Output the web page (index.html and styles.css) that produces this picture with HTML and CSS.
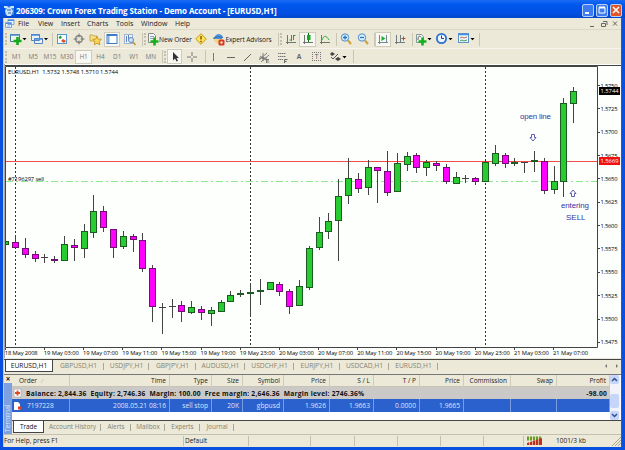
FILE: index.html
```html
<!DOCTYPE html>
<html lang="en">
<head>
    <meta charset="UTF-8">
    <title>206309: Crown Forex Trading Station</title>
    <link rel="stylesheet" href="styles.css">
</head>
<body>
<div class="window">
    <div class="titlebar">
        <svg class="app-icon" width="11" height="11" viewBox="0 0 11 11"><rect x="1" y="1" width="9" height="9" fill="#3c86dc"/><path d="M0 1h3l2 2 2-2h3v2H7l2 3-2 5H3L1 6l2-3H0z" fill="#c8e4f8"/><path d="M3 5h4M4 8h3" stroke="#2860b0"/></svg>
        <span class="title">206309: Crown Forex Trading Station - Demo Account - [EURUSD,H1]</span>
        <div class="win-buttons">
            <span class="win-btn"><svg width="12" height="12"><path d="M3 9h4" stroke="#fff" stroke-width="2"/></svg></span>
            <span class="win-btn"><svg width="12" height="12"><path d="M3 3.5h6v5.500H3z" stroke="#fff" fill="none"/><path d="M3 3.500h6" stroke="#fff" stroke-width="2"/></svg></span>
            <span class="win-btn close"><svg width="12" height="12"><path d="M3 3l6 6M9 3l-6 6" stroke="#fff" stroke-width="1.600"/></svg></span>
        </div>
    </div>

    <div class="client">
        <div class="menubar">
            <svg class="menu-icon" width="10" height="10"><path d="M3 .5h6v5H3zM.5 3.500h6v5h-6z" fill="#e8f2fc" stroke="#7ca8dc"/><path d="M3 1.500h6M1 4.500h5" stroke="#4c8cdc"/><path d="M2 7h3" stroke="#8cb4e4"/></svg>
            <span class="m-file">File</span>
            <span class="m-view">View</span>
            <span class="m-insert">Insert</span>
            <span class="m-charts">Charts</span>
            <span class="m-tools">Tools</span>
            <span class="m-window">Window</span>
            <span class="m-help">Help</span>
            <svg class="mdi" width="32" height="10"><path d="M2 7.500h4M13.500 4.500h4v3h-4zM15 2.500h4v3.500M25 2.500l4 4M29 2.500l-4 4" stroke="#666" fill="none"/></svg>
        </div>

        <div class="toolbar main-tools">
            <i class="grip"></i>
            <span class="btn w20"><svg width="18" height="14"><path d="M1.500 2.500h9v7h-9z" fill="#eef4e8" stroke="#4a7a9a"/><path d="M1 3h9" stroke="#4a90d0" stroke-width="1.500"/><path d="M8.500 5v8M4.500 9h8" stroke="#16a81c" stroke-width="2.600"/><path d="M13.500 6h4l-2 2.200z"/></svg></span>
            <span class="btn w21"><svg width="18" height="14"><path d="M1.500 2.500h8v6h-8zM4.500 6.500h8v5h-8z" fill="#e8f0fa" stroke="#5586bd"/><path d="M1 3h9M4 7h9" stroke="#4a8bd8" stroke-width="1.300"/><path d="M14 6h4l-2 2.200z"/></svg></span>
            <i class="sep"></i>
            <span class="btn w18"><svg width="12" height="12"><rect x="1.500" y="1.500" width="9" height="9" fill="#f6fafe" stroke="#5599cf"/><path d="M2.500 4.500L4.500 2.500 6 4.500 4 6z" fill="#14a02a"/><path d="M5 8l2-2 3 2-2 2z" fill="#e0502c"/></svg></span>
            <span class="btn w16"><svg width="12" height="12"><circle cx="6" cy="6" r="3.300" fill="none" stroke="#777" stroke-width="1.200"/><path d="M6 .5v4M6 7.500v4M.5 6h4M7.500 6h4" stroke="#777"/></svg></span>
            <span class="btn w17"><svg width="13" height="13"><path d="M1 2h3l1 1h3v5H1z" fill="#f6e08a" stroke="#c09a36" stroke-width=".8"/><path d="M8 3.500l1.300 2.600 3.100.3-2.200 2.100.6 3.200L8 10.300l-2.700 1.400.5-3.200-2.200-2.100 3.100-.3z" fill="#fbd554" stroke="#c48a1c" stroke-width=".8"/></svg></span>
            <span class="btn w16 pressed"><svg width="12" height="12"><rect x="1" y="1.500" width="10" height="9" fill="#fff" stroke="#3e7cc4"/><path d="M1 2.500h10" stroke="#3e7cc4"/><path d="M2.500 3v7" stroke="#78aee0" stroke-width="2"/></svg></span>
            <span class="btn w19"><svg width="13" height="13"><rect x="1.500" y="1.500" width="8" height="9" fill="#eef3fa" stroke="#9cb4d4"/><path d="M3.500 3v6M5.500 2v5M7.500 4v5" stroke="#6482b8"/><circle cx="8" cy="7" r="2.500" fill="#cfe4f8" stroke="#5c8cc0"/><path d="M10 9l2.500 3" stroke="#c8963c" stroke-width="1.600"/></svg></span>
            <i class="sep"></i><i class="grip"></i>
            <span class="btn w45"><svg width="12" height="14"><path d="M1.500 1.500h5l2 2v7h-7z" fill="#f4f4f4" stroke="#888"/><path d="M3 4.500h4M3 6.500h4" stroke="#8fa6b8"/><path d="M7.500 5.500v8M3.500 9.500h8" stroke="#16b01c" stroke-width="2.600"/></svg><b class="label">New Order</b></span>
            <span class="btn w18"><svg width="12" height="12"><path d="M6 .7L11.300 6 6 11.300.7 6z" fill="#ffe45a" stroke="#c8961c"/><path d="M6 3v3.600M6 7.800v1.500" stroke="#6b4a00" stroke-width="1.300"/></svg></span>
            <span class="btn w65"><svg width="12" height="13"><path d="M1 5c2-5 7-5 9-1l-2 3-6 1z" fill="#4f94dc"/><path d="M1 6h8l-1 4-3 1-3-2z" fill="#f5d67c"/><path d="M0 5.500c3-2 6-2 10-1" stroke="#2d68b0" fill="none"/><rect x="5.500" y="6.500" width="6" height="6" rx="1.500" fill="#d83a20"/><rect x="7.500" y="8.500" width="2" height="2" fill="#fff"/></svg><b class="label">Expert Advisors</b></span>
            <i class="sep"></i><i class="grip"></i>
            <span class="btn w16"><svg width="12" height="12"><path d="M2.500 2v9M1 9.500h10" stroke="#6d776d"/><path d="M6.500 2v6M8.500 2v5M4.500 7h2M8.500 2.500h2" stroke="#2d9a3c"/></svg></span>
            <span class="btn w17 pressed"><svg width="12" height="12"><path d="M2.500 2v9M1 9.500h10" stroke="#6d776d"/><path d="M6.500 0v9" stroke="#0a7014"/><rect x="5" y="2" width="3.500" height="5" fill="#16a824"/></svg></span>
            <span class="btn w17"><svg width="12" height="12"><path d="M2.500 2v9M1 9.500h10" stroke="#6d776d"/><path d="M3 7c2-5 4-5 7 0" stroke="#3aa848" fill="none"/></svg></span>
            <i class="sep"></i>
            <span class="btn w17"><svg width="12" height="12"><circle cx="5" cy="4.500" r="3.700" fill="#d9efff" stroke="#4a8cc8"/><path d="M3 4.500h4M5 2.500v4" stroke="#2874c0" stroke-width="1.300"/><path d="M8 7.500l3 3.500" stroke="#cda23a" stroke-width="2"/></svg></span>
            <span class="btn w17"><svg width="12" height="12"><circle cx="5" cy="4.500" r="3.700" fill="#d9efff" stroke="#4a8cc8"/><path d="M3 4.500h4" stroke="#2874c0" stroke-width="1.300"/><path d="M8 7.500l3 3.500" stroke="#cda23a" stroke-width="2"/></svg></span>
            <i class="sep"></i>
            <span class="btn w16 pressed"><svg width="12" height="12"><path d="M2.500 2v9M1 9.500h10M9.500 2v7" stroke="#6d8d90"/><path d="M4.500 3l4 2.500-4 2.500z" fill="#1cac30"/></svg></span>
            <span class="btn w18"><svg width="12" height="12"><path d="M2.500 2v9M1 9.500h10M6.500 2v7" stroke="#6d7d80"/><path d="M7.500 5.500h4M9.500 3.500v4" stroke="#b04a30"/></svg></span>
            <i class="sep"></i>
            <span class="btn w20"><svg width="18" height="14"><path d="M2.500 2.500h5l2 2v6h-7z" fill="#f0f2ee" stroke="#899"/><path d="M4 8c0-5 2-4 3-3" stroke="#566" fill="none"/><path d="M8.500 5.500v8M4.500 9.500h8" stroke="#16b01c" stroke-width="2.600"/><path d="M13.500 6h4l-2 2.200z"/></svg></span>
            <span class="btn w22"><svg width="18" height="14"><circle cx="6.500" cy="6.500" r="4.600" fill="#eaf5ff" stroke="#2b70d0" stroke-width="1.800"/><path d="M6.500 3.500v3h2.500" stroke="#345" fill="none"/><path d="M13.500 6h4l-2 2.200z"/></svg></span>
            <span class="btn w21"><svg width="18" height="14"><rect x="1.500" y="1.500" width="10" height="9" fill="#edf6fb" stroke="#5a94cc"/><path d="M1 2.500h11" stroke="#4a8cd8" stroke-width="1.500"/><path d="M3 6l2-1 2 1 3-1" stroke="#b07850" fill="none"/><path d="M3 9l2-1 2 1 3-1" stroke="#4a9a58" fill="none"/><path d="M13.500 6h4l-2 2.200z"/></svg></span>
            <i class="sep"></i>
        </div>

        <div class="toolbar period-tools">
            <i class="grip"></i>
            <span class="period">M1</span>
            <span class="period">M5</span>
            <span class="period">M15</span>
            <span class="period">M30</span>
            <span class="period pressed">H1</span>
            <span class="period">H4</span>
            <span class="period">D1</span>
            <span class="period">W1</span>
            <span class="period">MN</span>
            <i class="sep"></i><i class="grip"></i>
            <span class="btn w15 pressed"><svg width="10" height="12"><path d="M3 1v8.500l2-2 1.500 3 1.500-.7-1.500-2.800H9z" fill="#333"/></svg></span>
            <span class="btn w20"><svg width="12" height="12"><path d="M6 1v4M6 7v4M1 6h4M7 6h4" stroke="#777"/></svg></span>
            <i class="sep"></i>
            <span class="btn w15"><svg width="11" height="12"><path d="M5.500 2v8" stroke="#777"/></svg></span>
            <span class="btn w18"><svg width="11" height="12"><path d="M2 6.500h8" stroke="#666"/></svg></span>
            <span class="btn w16"><svg width="11" height="12"><path d="M2 10l7-7" stroke="#666"/></svg></span>
            <span class="btn w18"><svg width="12" height="12"><path d="M1 9l8-7M3 11l8-7M2 5l6 4M5 2v8M1 7h8M8 8.500h3M8.500 8v4h3M9 10h2" stroke="#666" stroke-width=".8" fill="none"/></svg></span>
            <span class="btn w18"><svg width="12" height="12"><path d="M2 2.500h8M2 5.500h8M2 8.500h5" stroke="#777" stroke-dasharray="1.500 .5"/><path d="M8.500 12V8.500h3M8.500 10.500h2" stroke="#666" fill="none"/></svg></span>
            <span class="btn w16 letter">A</span>
            <span class="btn w19"><span class="text-box">T</span></span>
            <span class="btn w24"><svg width="18" height="12"><path d="M1 3l2-2 3 2-3 2zM6 8l3-2 3 2-3 2z" fill="#444"/><path d="M2 6l2 2 5-5" stroke="#555" fill="none"/><path d="M13.500 5h4l-2 2.500z"/></svg></span>
            <i class="sep"></i>
        </div>

        <svg id="chart" class="chart" width="617" height="294" viewBox="4 64 617 294">
            <path class="frame" d="M4 65.500H621M5.500 347.500V66.500H597.500V347.500H5.500"/>
            <path class="shade" d="M4.500 64V358"/>
            <g id="day-lines" class="day-lines"></g>
            <path class="order-line" d="M6 181.500H597"/>
            <path class="bid-line" d="M6 161.500H597"/>
            <g id="candles"></g>
            <g id="axes" class="axes"></g>
            <text x="8" y="74" textLength="110">EURUSD,H1&#160; 1.5732 1.5748 1.5710 1.5744</text>
            <text x="8" y="180.500" textLength="36">#7196297 sell</text>
            <rect x="599" y="87" width="21" height="8" fill="#000"/>
            <text class="price-tag" x="600.500" y="93.300" textLength="18">1.5744</text>
            <rect x="599" y="157" width="21" height="8" fill="#f01010"/>
            <text class="price-tag" x="600.500" y="163.300" textLength="18">1.5669</text>
            <g class="notes">
                <text x="520" y="119" textLength="31">open line</text>
                <text x="561" y="208" textLength="28">entering</text>
                <text x="566" y="219.500" textLength="19.500">SELL</text>
                <path d="M531.500 134.500h3v3h1.500l-3 3.500-3-3.500h1.500zM571.500 196.500h3v-3h1.500l-3-3.500-3 3.500h1.500z"/>
            </g>
        </svg>

        <div class="chart-tabs">
            <span class="tab active">EURUSD,H1</span>
            <span class="tab t50">GBPUSD,H1</span>
            <span class="tab t45">USDJPY,H1</span>
            <span class="tab t47">GBPJPY,H1</span>
            <span class="tab t49">AUDUSD,H1</span>
            <span class="tab t49">USDCHF,H1</span>
            <span class="tab t46">EURJPY,H1</span>
            <span class="tab t49">USDCAD,H1</span>
            <span class="tab t49">EURUSD,H1</span>
            <svg class="tab-arrows" width="18" height="8"><path d="M4 2v4L2 4zM13 2v4l2-2z" fill="#777"/></svg>
        </div>

        <div class="terminal">
            <div class="side"><span class="side-close">×</span><div class="side-name">Terminal</div></div>
            <div class="panel">
                <div class="grid-wrap">
                    <div class="orders">
                        <div class="row head">
                            <span class="order">Order <small>⁄</small></span><span>Time</span><span>Type</span><span>Size</span><span>Symbol</span><span>Price</span><span>S / L</span><span>T / P</span><span>Price</span><span>Commission</span><span>Swap</span><span>Profit</span>
                        </div>
                        <div class="balance">
                            <svg width="9" height="10"><rect x="1" y="1" width="7" height="8" fill="#fff" stroke="#aaa" stroke-width=".7"/><path d="M4.500 2.500v5M2 5h5" stroke="#e04828" stroke-width="1.800"/></svg>
                            <span class="sums">Balance: 2,844.36&nbsp; Equity: 2,746.36&nbsp; Margin: 100.00&nbsp; Free margin: 2,646.36&nbsp; Margin level: 2746.36%</span>
                            <span class="profit">-98.00</span>
                        </div>
                        <div class="row selected">
                            <span class="order"><svg width="9" height="10"><path d="M1 1h4l2 2v6H1z" fill="#fff"/><path d="M5 5.500h3.500v3H5z" fill="#e04020"/></svg>7197228</span><span>2008.05.21 08:16</span><span>sell stop</span><span>20K</span><span>gbpusd</span><span>1.9626</span><span>1.9663</span><span>0.0000</span><span>1.9665</span><span></span><span></span><span></span>
                        </div>
                    </div>
                    <div class="scrollbar">
                        <svg width="9" height="9"><path d="M2 6l2.500-2.500L7 6" stroke="#34508c" stroke-width="1.500" fill="none"/></svg>
                        <i class="thumb"></i>
                        <svg width="9" height="9"><path d="M2 3l2.500 2.500L7 3" stroke="#34508c" stroke-width="1.500" fill="none"/></svg>
                    </div>
                </div>
                <div class="term-tabs">
                    <span class="tab active">Trade</span>
                    <span class="tab t57">Account History</span>
                    <span class="tab t30">Alerts</span>
                    <span class="tab t34">Mailbox</span>
                    <span class="tab t35">Experts</span>
                    <span class="tab t34">Journal</span>
                </div>
            </div>
        </div>

        <div class="statusbar">
            <span class="help-text">For Help, press F1</span>
            <span class="profile">Default</span>
            <span class="c62"></span><span class="c44"></span><span class="c43"></span><span class="c43"></span><span class="c43"></span><span class="c40"></span>
            <svg class="net" width="16" height="10"><path d="M0 2.500h15" stroke="#6a9a28" stroke-width="4" stroke-dasharray="2.200 .8"/><path d="M0 9V7l15-5v7z" fill="#c03020"/><path d="M2.500 1v8M5.500 1v8M8.500 1v8M11.500 1v8" stroke="#ece0c8" stroke-width=".7"/></svg>
            <span class="traffic">1001/3 kb</span>
            <svg class="size-grip" width="10" height="10"><path d="M1 10l9-9M4 10l6-6M7 10l3-3" stroke="#aaa797"/></svg>
        </div>
    </div>
</div>
<script src="script.js"></script>
</body>
</html>
```
FILE: styles.css
```css
* {
    box-sizing: border-box;
}

body {
    margin: 0;
    overflow: hidden;
    font-family: "Open Sans", "Noto Sans", sans-serif;
    font-size: 6.7px;
    line-height: 9px;
    color: #222;
}

svg {
    display: block;
    flex: none;
}

.window {
    width: 625px;
    height: 450px;
    display: flex;
    flex-direction: column;
    background: #0a50e0;
}

.titlebar {
    height: 18px;
    display: flex;
    align-items: center;
    padding: 2px 3px 0 4px;
    background: linear-gradient(#1a6cf4, #0058ee 25%, #0050e4 70%, #0048cc);
}

.title {
    margin-left: 1px;
    flex: 1;
    color: #fff;
    font-size: 8px;
    font-weight: bold;
    letter-spacing: -.11px;
    white-space: nowrap;
}

.win-buttons {
    display: flex;
    gap: 2px;
}

.win-btn {
    width: 12px;
    height: 13px;
    border: 1px solid #b8d0f8;
    border-radius: 2px;
    background: #3c7cf0;
}

.win-btn svg {
    margin: -1px;
}

.close {
    background: #e05428;
}

.client {
    flex: 1;
    margin: 0 3px 3px;
    border-left: 1px solid #b8c8e8;
    border-right: 1px solid #1c5ce0;
    background: #ece9d8;
    display: flex;
    flex-direction: column;
}

/* menu */
.menubar {
    height: 12px;
    display: flex;
    align-items: center;
    border-bottom: 1px solid #dcd8c8;
    font-size: 7px;
}

.menu-icon { margin: 1px 3px 0 1px; }
.m-file { width: 20px; }
.m-view { width: 23px; }
.m-insert { width: 26px; }
.m-charts { width: 29px; }
.m-tools { width: 25px; }
.m-window { width: 34px; }
.m-help { flex: 1; }
.mdi { margin-right: 1px; }

/* toolbars */
.toolbar {
    display: flex;
    align-items: center;
}

.main-tools { height: 18px; }

.period-tools {
    height: 16px;
    border-top: 1px solid #f6f4ec;
}

.grip {
    width: 4px;
    height: 12px;
    flex: none;
    border-left: 2px dotted #c4c0ae;
    margin-left: 1px;
    margin-right: -1px;
}

.sep {
    width: 4px;
    height: 13px;
    flex: none;
    border-right: 1px solid #c9c5b3;
}

.btn {
    height: 15px;
    flex: none;
    display: flex;
    align-items: center;
    justify-content: center;
}

.pressed {
    background: #f8f7f1;
    border: 1px solid #d0ccbc;
}

.label {
    font-weight: normal;
    font-size: 6.6px;
    white-space: nowrap;
    letter-spacing: -.1px;
}

.w15 { width: 15px; }
.w16 { width: 16px; }
.w17 { width: 17px; }
.w18 { width: 18px; }
.w19 { width: 19px; }
.w20 { width: 20px; }
.w21 { width: 21px; }
.w22 { width: 22px; }
.w24 { width: 24px; }
.w45 { width: 45px; }
.w65 { width: 65px; }

.period {
    width: 16.8px;
    height: 14px;
    line-height: 13px;
    text-align: center;
    color: #777;
    font-size: 6.4px;
}

.period.pressed { line-height: 11px; }

.letter {
    font-weight: bold;
    color: #666;
}

.text-box {
    width: 9px;
    height: 9px;
    border: 1px dotted #777;
    line-height: 7px;
    text-align: center;
    color: #555;
}

/* chart */
.chart {
    background: #fdfffc;
    font-size: 5.8px;
}

.frame {
    fill: none;
    stroke: #444;
}

.shade { stroke: #aaa; }

.day-lines {
    stroke: #333;
    stroke-dasharray: 2 2;
}

.order-line {
    stroke: #8ee68e;
    stroke-dasharray: 7 3 2 3;
}

.bid-line { stroke: #f04c4c; }

.wick {
    stroke: #444;
}

.up {
    fill: #28cc30;
    stroke: #1c5c20;
}

.down {
    fill: #ff00ff;
    stroke: #701070;
}

.axes path { stroke: #444; }
.price-tag { fill: #fff; }

.notes {
    fill: #3434a4;
    font-family: "Liberation Sans", sans-serif;
    font-size: 7.9px;
}

.notes path {
    fill: #fff;
    stroke: #4c4cac;
    stroke-width: .9;
}

/* tabs */
.chart-tabs, .term-tabs {
    display: flex;
    color: #86826f;
}

.chart-tabs {
    height: 14px;
    border-top: 1px solid #444;
    margin-top: 1px;
    align-items: flex-start;
}

.tab {
    height: 12px;
    line-height: 12px;
    text-align: center;
    white-space: nowrap;
    background: linear-gradient(#aaa695, #aaa695) right center / 1px 7px no-repeat;
}

.active {
    background: #fff;
    color: #111;
    border: 1px solid #444;
    border-top: 0;
}

.chart-tabs .active {
    width: 48px;
    margin-left: 1px;
}

.t30 { width: 30px; }
.t34 { width: 34px; }
.t35 { width: 35px; }
.t45 { width: 45px; }
.t46 { width: 46px; }
.t47 { width: 47px; }
.t49 { width: 49px; }
.t50 { width: 51px; }
.t57 { width: 57px; }

.tab-arrows { margin: 2px 0 0 auto; }

/* terminal */
.terminal {
    height: 60px;
    margin-top: 1px;
    border-top: 1px solid #777;
    display: flex;
}

.side {
    width: 8px;
    display: flex;
    flex-direction: column;
}

.side-close {
    height: 8px;
    line-height: 7px;
    font-size: 8px;
    font-weight: bold;
    text-align: center;
}

.side-name {
    flex: 1;
    background: #7ca0e0;
    color: #d4e0f8;
    writing-mode: vertical-rl;
    transform: rotate(180deg);
    line-height: 8px;
    padding-top: 2px;
}

.panel { flex: 1; }

.grid-wrap {
    height: 46px;
    display: flex;
    background: #fff;
    border-bottom: 1px solid #444;
}

.orders { width: 598px; }

.row {
    display: grid;
    grid-template-columns: 58px 100px 42px 31px 41px 46px 44px 46px 44px 47px 46px 53px;
    text-align: right;
}

.row span {
    padding-right: 3px;
    border-right: 1px solid #d0ccbc;
    white-space: nowrap;
}

.row .order {
    text-align: left;
    padding-left: 7px;
}

.order small { color: #999; margin-left: 3px; }

.head {
    height: 12px;
    line-height: 12px;
    background: #ece9d8;
    border-bottom: 1px solid #c8c4b4;
    font-size: 6.5px;
}

.balance {
    height: 12px;
    display: flex;
    align-items: center;
    background: #cbc9c8;
    font-weight: bold;
    color: #111;
    padding: 0 3px 0 1px;
    letter-spacing: .22px;
}

.sums {
    margin-left: 4px;
    flex: 1;
    white-space: nowrap;
}

.selected {
    height: 13px;
    line-height: 13px;
    background: #2b61cc;
    color: #dce6fc;
}

.selected span { border-color: #7c9ce0; }

.row.selected .order {
    display: flex;
    align-items: center;
    gap: 5px;
    padding-left: 1px;
}

.scrollbar {
    width: 10px;
    display: flex;
    flex-direction: column;
    justify-content: space-between;
    background: #f2f3fa;
}

.scrollbar svg, .thumb {
    background: #c6d6fa;
    border-radius: 2px;
}

.thumb {
    width: 9px;
    height: 14px;
    margin-top: 7px;
}

.term-tabs {
    height: 13px;
    align-items: flex-start;
    font-size: 6.4px;
}

.term-tabs .active {
    width: 31px;
    margin-left: 1px;
}

/* status bar */
.statusbar {
    flex: 1;
    display: flex;
    align-items: center;
    border-top: 1px solid #c4c0b0;
    font-size: 6.5px;
}

.statusbar span {
    height: 10px;
    line-height: 10px;
    border-right: 1px solid #c4c0b0;
    white-space: nowrap;
}

.help-text { width: 180px; }
.profile { width: 65px; padding-left: 1px; }
.c40 { width: 40px; }
.c43 { width: 43px; }
.c44 { width: 44px; }
.c62 { width: 62px; }
.net { margin-left: 3px; }

.statusbar .traffic {
    margin-left: 13px;
    border: 0;
}

.size-grip { margin-left: auto; }
```
FILE: script.js
```javascript
const NS = 'http://www.w3.org/2000/svg';

// [body top, body bottom, wick top, wick bottom, direction]
const candles = [
    [242, 247, 236, 248, 'd'], [248, 254, 238, 258, 'd'], [254, 258, 251, 262, 'd'], [257, 257, 254, 263, 'n'],
    [259, 260, 256, 263, 'd'], [244, 260, 236, 260, 'u'], [245, 247, 239, 261, 'd'], [231, 248, 224, 258, 'u'],
    [211, 232, 195, 238, 'u'], [211, 227, 206, 232, 'd'], [229, 247, 229, 258, 'd'], [236, 246, 231, 249, 'u'],
    [236, 239, 234, 252, 'd'], [240, 268, 233, 272, 'd'], [268, 306, 265, 322, 'd'], [307, 307, 303, 334, 'n'],
    [306, 306, 299, 318, 'n'], [305, 311, 301, 322, 'd'], [307, 312, 301, 314, 'u'], [309, 312, 306, 320, 'd'],
    [310, 313, 307, 326, 'u'], [302, 311, 300, 311, 'u'], [295, 301, 291, 302, 'u'], [293, 294, 290, 297, 'u'],
    [292, 293, 283, 317, 'u'], [290, 291, 279, 305, 'u'], [282, 289, 282, 290, 'u'], [284, 291, 282, 296, 'd'],
    [291, 306, 289, 314, 'd'], [286, 305, 280, 306, 'u'], [248, 287, 246, 290, 'u'], [232, 247, 217, 250, 'u'],
    [221, 231, 213, 239, 'u'], [196, 220, 179, 261, 'u'], [178, 195, 158, 204, 'u'], [179, 188, 173, 193, 'd'],
    [167, 187, 160, 195, 'u'], [167, 170, 167, 203, 'd'], [171, 192, 151, 196, 'd'], [163, 191, 153, 192, 'u'],
    [156, 164, 152, 171, 'u'], [155, 167, 153, 173, 'd'], [162, 167, 160, 176, 'u'], [163, 165, 161, 171, 'd'],
    [167, 181, 164, 184, 'd'], [177, 183, 172, 184, 'u'], [178, 178, 175, 183, 'n'], [178, 181, 177, 185, 'd'],
    [162, 181, 161, 182, 'u'], [153, 163, 145, 166, 'u'], [155, 163, 153, 168, 'd'], [162, 163, 158, 166, 'u'],
    [162, 162, 162, 173, 'n'], [160, 161, 151, 172, 'u'], [161, 190, 158, 194, 'd'], [181, 189, 166, 194, 'u'],
    [103, 181, 98, 197, 'u'], [91, 103, 87, 123, 'u']
];

function add(parent, name, attrs, text) {
    const el = document.createElementNS(NS, name);
    for (const key in attrs) el.setAttribute(key, attrs[key]);
    if (text) el.textContent = text;
    document.getElementById(parent).appendChild(el);
}

// the first candle is cut off by the frame
add('candles', 'path', { class: 'wick', d: 'M5.5 238V247' });
add('candles', 'rect', { class: 'up', x: 5.5, y: 241.5, width: 3, height: 3 });

candles.forEach(function (c, i) {
    const x = Math.floor(15.5 + i * 9.792) + 0.5;
    add('candles', 'path', { class: 'wick', d: `M${x} ${c[2]}V${c[3]}` });
    if (c[4] === 'n') {
        add('candles', 'path', { class: 'wick', d: `M${x - 3.5} ${c[0] + 0.5}h7` });
    } else {
        add('candles', 'rect', { class: c[4] === 'u' ? 'up' : 'down', x: x - 3, y: c[0] + 0.5, width: 6, height: c[1] - c[0] });
    }
});

[15.5, 250.5, 485.5].forEach(x => add('day-lines', 'path', { d: `M${x} 67V347` }));

for (let i = 0; i < 12; i++) {
    const y = 85.5 + i * 23.35;
    add('axes', 'path', { d: `M598 ${Math.floor(y) + 0.5}h2` });
    add('axes', 'text', { x: 600.5, y: y + 2, textLength: 17 }, (1.575 - i * 0.0025).toFixed(4));
}

const times = ['18 May 2008', '19 May 03:00', '19 May 07:00', '19 May 11:00', '19 May 15:00', '19 May 19:00', '19 May 23:00',
    '20 May 03:00', '20 May 07:00', '20 May 11:00', '20 May 15:00', '20 May 19:00', '20 May 23:00', '21 May 03:00', '21 May 07:00'];
times.forEach(function (t, i) {
    const x = 5.2 + i * 39.17;
    add('axes', 'path', { d: `M${Math.floor(x) + 0.5} 348v2` });
    add('axes', 'text', { x: x - 0.5, y: 355.3, textLength: i ? 35 : 33 }, t);
});
```
